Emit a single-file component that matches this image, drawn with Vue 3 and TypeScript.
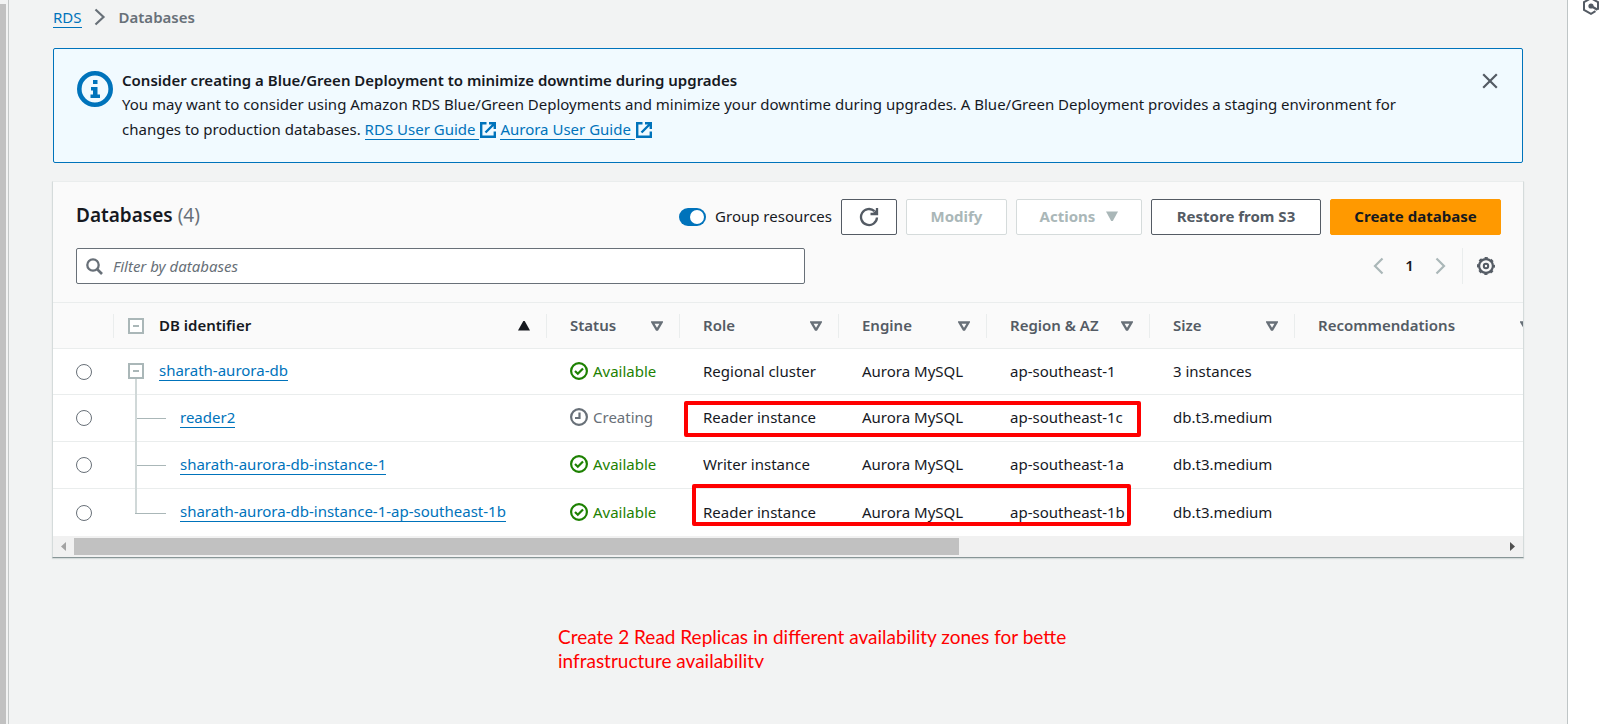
<script setup lang="ts">
import { ref } from 'vue'

interface Instance {
  id: string
  child: boolean
  status: 'Available' | 'Creating'
  role: string
  engine: string
  region: string
  size: string
}

const rows: Instance[] = [
  { id: 'sharath-aurora-db', child: false, status: 'Available', role: 'Regional cluster', engine: 'Aurora MySQL', region: 'ap-southeast-1', size: '3 instances' },
  { id: 'reader2', child: true, status: 'Creating', role: 'Reader instance', engine: 'Aurora MySQL', region: 'ap-southeast-1c', size: 'db.t3.medium' },
  { id: 'sharath-aurora-db-instance-1', child: true, status: 'Available', role: 'Writer instance', engine: 'Aurora MySQL', region: 'ap-southeast-1a', size: 'db.t3.medium' },
  { id: 'sharath-aurora-db-instance-1-ap-southeast-1b', child: true, status: 'Available', role: 'Reader instance', engine: 'Aurora MySQL', region: 'ap-southeast-1b', size: 'db.t3.medium' },
]

const columns = ['Status', 'Role', 'Engine', 'Region & AZ', 'Size', 'Recommendations']
const grouped = ref(true)
const filter = ref('')
const selected = ref('')
const bannerOpen = ref(true)
</script>

<template>
  <div class="shell">
    <div class="rail"><div class="rail-thumb"></div></div>
    <main class="main">
      <nav class="crumbs" aria-label="Breadcrumb">
        <a href="#" class="link">RDS</a>
        <svg class="crumb-sep" width="12" height="18" viewBox="0 0 12 18" aria-hidden="true">
          <path d="M1.5 1.5 9.5 9l-8 7.5" fill="none" stroke="#687078" stroke-width="2.2" />
        </svg>
        <span class="crumb-current">Databases</span>
      </nav>

      <section v-if="bannerOpen" class="banner">
        <svg class="info" width="36" height="36" viewBox="0 0 36 36" aria-hidden="true">
          <circle cx="18" cy="18" r="15.7" fill="none" stroke="#0073bb" stroke-width="4.6" />
          <path d="M16 9h4.5v4H16zM14 16h6.5v7.500H23V27h-9.500v-3.500H16V19.500h-2z" fill="#0073bb" />
        </svg>
        <div class="banner-text">
          <strong>Consider creating a Blue/Green Deployment to minimize downtime during upgrades</strong>
          <p>
            You may want to consider using Amazon RDS Blue/Green Deployments and minimize your downtime during upgrades. A Blue/Green Deployment provides a staging environment for changes to production databases.
            <template v-for="guide in ['RDS User Guide', 'Aurora User Guide']" :key="guide">
              <a href="#" class="link guide">{{ guide }}</a><svg class="external" width="16" height="16" viewBox="0 0 16 16" aria-hidden="true">
                <path d="M6.500 1.200H1.200v13.600h13.600V9.500M9 1.200h5.800V7M14.500 1.500 5.500 10.500" fill="none" stroke="#0073bb" stroke-width="2.400" />
              </svg>{{ ' ' }}
            </template>
          </p>
        </div>
        <button class="close" type="button" aria-label="Dismiss" @click="bannerOpen = false">
          <svg width="16" height="16" viewBox="0 0 16 16"><path d="m1.200 1.200 13.600 13.600m0-13.600L1.200 14.800" fill="none" stroke="#545b64" stroke-width="2.200" /></svg>
        </button>
      </section>

      <section class="panel">
        <header class="head">
          <div class="bar">
            <h1>Databases <span>(4)</span></h1>
            <label class="toggle"><input v-model="grouped" type="checkbox" role="switch" /><span>Group resources</span></label>
            <div class="actions">
              <button class="btn refresh" type="button" aria-label="Refresh">
                <svg width="20" height="20" viewBox="0 0 20 20">
                  <path d="M18 10.500a8 8 0 1 1-2.500-6.300M18 1v6h-6.500" fill="none" stroke="#545b64" stroke-width="2.300" />
                  <path d="m13 7 5-5v5z" fill="#545b64" />
                </svg>
              </button>
              <button class="btn modify" type="button" disabled>Modify</button>
              <button class="btn menu" type="button" disabled>
                Actions
                <svg width="12" height="10" viewBox="0 0 12 10"><path d="M0 .5h12L6.800 10H5.200z" fill="#aab7b8" /></svg>
              </button>
              <button class="btn restore" type="button">Restore from S3</button>
              <button class="btn primary" type="button">Create database</button>
            </div>
          </div>
          <div class="bar tools">
            <div class="search">
              <svg width="17" height="17" viewBox="0 0 17 17" aria-hidden="true">
                <circle cx="7" cy="7" r="5.700" fill="none" stroke="#687078" stroke-width="2.300" />
                <path d="m11 11 5 5" stroke="#687078" stroke-width="2.600" />
              </svg>
              <input v-model="filter" type="text" aria-label="Filter by databases" placeholder="Filter by databases" />
            </div>
            <div class="pager">
              <button type="button" aria-label="Previous page" disabled>
                <svg width="11" height="18" viewBox="0 0 11 18"><path d="M9.500 1.500 2 9l7.500 7.500" fill="none" stroke="#aab7b8" stroke-width="2.200" /></svg>
              </button>
              <button type="button" class="page">1</button>
              <button type="button" aria-label="Next page" disabled>
                <svg width="11" height="18" viewBox="0 0 11 18"><path d="M1.500 1.500 9 9l-7.500 7.500" fill="none" stroke="#aab7b8" stroke-width="2.200" /></svg>
              </button>
              <button type="button" class="gear" aria-label="Preferences">
                <svg width="18" height="18" viewBox="0 0 18 18" fill="none" stroke="#545b64">
                  <circle cx="9" cy="9" r="6.900" stroke-width="2.200" />
                  <circle cx="9" cy="9" r="8.100" stroke-width="1.800" stroke-dasharray="3.200 3.162" stroke-dashoffset="1.600" />
                  <circle cx="9" cy="9" r="2.200" stroke-width="2" />
                </svg>
              </button>
            </div>
          </div>
        </header>

        <div class="scroller">
          <table>
            <colgroup>
              <col class="c-pick" /><col class="c-id" /><col class="c-status" /><col class="c-role" />
              <col class="c-engine" /><col class="c-region" /><col class="c-size" /><col class="c-rec" />
            </colgroup>
            <thead>
              <tr>
                <th aria-label="Selection"></th>
                <th class="sorted">
                  <div class="th">
                    <button type="button" class="box" aria-label="Collapse all"></button>
                    <span class="grow">DB identifier</span>
                    <button type="button" class="sort" aria-label="Sorted ascending">
                      <svg width="12" height="10" viewBox="0 0 12 10"><path d="M5.300 0h1.400L12 9.500H0z" fill="#16191f" /></svg>
                    </button>
                  </div>
                </th>
                <th v-for="name in columns" :key="name">
                  <div class="th">
                    <span class="grow">{{ name }}</span>
                    <button type="button" class="sort" :aria-label="`Sort by ${name}`">
                      <svg width="12" height="10" viewBox="0 0 12 10"><path d="M1.500 1.500h9L6.300 8.500h-.6z" fill="none" stroke="#687078" stroke-width="2.400" /></svg>
                    </button>
                  </div>
                </th>
              </tr>
            </thead>
            <tbody>
              <tr v-for="row in rows" :key="row.id">
                <td class="pick"><input v-model="selected" type="radio" name="database" :value="row.id" :aria-label="`Select ${row.id}`" /></td>
                <td class="ident" :class="row.child ? 'child' : 'parent'">
                  <div class="id-cell">
                    <button v-if="!row.child" type="button" class="box" aria-label="Collapse cluster"></button>
                    <a href="#" class="link">{{ row.id }}</a>
                  </div>
                </td>
                <td>
                  <div class="status" :class="row.status.toLowerCase()">
                    <svg width="18" height="18" viewBox="0 0 18 18" fill="none" stroke="currentColor" stroke-width="2.200" aria-hidden="true">
                      <circle cx="9" cy="9" r="7.900" />
                      <path v-if="row.status === 'Available'" d="m5 9 2.800 2.700L13 6.500" />
                      <path v-else d="M9.500 4.500v5.500H5" />
                    </svg>
                    {{ row.status }}
                  </div>
                </td>
                <td>{{ row.role }}</td>
                <td>{{ row.engine }}</td>
                <td>{{ row.region }}</td>
                <td>{{ row.size }}</td>
                <td></td>
              </tr>
            </tbody>
          </table>
          <div class="mark mark-first"></div>
          <div class="mark mark-second"></div>
        </div>

        <div class="hbar" aria-hidden="true">
          <svg width="21" height="21" viewBox="0 0 21 21"><path d="M13 6v9l-5-4.500z" fill="#a3a3a3" /></svg>
          <div class="track"><div class="thumb"></div></div>
          <svg width="21" height="21" viewBox="0 0 21 21"><path d="M8 6v9l5-4.500z" fill="#505050" /></svg>
        </div>
      </section>

      <p class="note">Create 2 Read Replicas in different availability zones for bette<br />infrastructure availability</p>
    </main>
    <aside class="side">
      <button type="button" aria-label="Open panel">
        <svg width="18" height="18" viewBox="0 0 18 18" fill="none" stroke="#545b64" stroke-width="2">
          <path d="M16 12.800V5.200L9 1.200 2 5.200v7.600l7 4 4.500-2.600" />
          <circle cx="9" cy="9" r="2.600" fill="#545b64" stroke="none" />
          <path d="m9 9 6.500 3.800" stroke-width="2.400" />
        </svg>
      </button>
    </aside>
  </div>
</template>

<style>
body {
  background: #f2f3f3;
}
</style>

<style scoped>
.shell {
  display: flex;
  min-height: 100vh;
  background: #f2f3f3;
  color: #16191f;
  font-family: "Noto Sans", "Open Sans", sans-serif;
  font-size: 15px;
  line-height: 24px;
}
.shell * {
  box-sizing: border-box;
}
button {
  font: inherit;
  color: inherit;
  background: none;
  border: 0;
  padding: 0;
}
svg {
  display: block;
  flex: none;
}
.rail {
  display: flex;
  flex: none;
  width: 9px;
  padding-top: 4px;
  border-right: 1px solid #c4c8c8;
}
.rail-thumb {
  width: 6px;
  background: #c1c1c1;
}
.main {
  flex: 1;
  min-width: 0;
  padding: 5px 44px 0;
}
.side {
  flex: none;
  width: 44px;
  background: #fff;
  border-left: 1px solid #bfc5c6;
}
.side button {
  display: block;
  margin: -3px 0 0 14px;
}
.link {
  color: #0073bb;
  text-decoration: none;
  border-bottom: 1px solid #0073bb;
}
.crumbs {
  display: flex;
  align-items: center;
  height: 24px;
  margin-bottom: 19px;
}
.crumbs .link {
  line-height: 20px;
}
.crumb-sep {
  margin: 0 13px 0 12px;
}
.crumb-current {
  color: #687078;
  font-weight: 600;
}
.banner {
  display: flex;
  align-items: flex-start;
  padding: 19px 24px 20px 23px;
  background: #f1faff;
  border: 1px solid #0073bb;
  border-radius: 2px;
}
.info {
  margin: 3px 9px 0 0;
}
.banner-text {
  flex: 1;
  padding-right: 70px;
}
.banner strong {
  display: block;
  font-weight: 600;
}
.banner p {
  margin: 0;
  line-height: 25px;
}
.guide {
  padding-right: 4px;
}
.external {
  display: inline-block;
  vertical-align: -3px;
  margin-left: 1px;
}
.close {
  margin-top: 5px;
}
.panel {
  margin: 18px -1px 0;
  background: #fff;
  border: 1px solid #d5dbdb;
  border-top-color: #eaeded;
  border-bottom-color: #879596;
  box-shadow: 0 1px 1px #d5dbdb;
}
.head {
  padding: 17px 22px 18px 23px;
  background: #fafafa;
  border-bottom: 1px solid #eaeded;
}
.bar {
  display: flex;
  align-items: center;
  height: 36px;
}
.tools {
  justify-content: space-between;
  margin-top: 13px;
}
h1 {
  flex: 1;
  align-self: flex-start;
  margin: 0;
  font-size: 19px;
  line-height: 32px;
  font-weight: 600;
}
h1 span {
  color: #687078;
  font-weight: 400;
}
.toggle {
  display: flex;
  align-items: center;
  gap: 9px;
  margin-right: 9px;
}
.toggle span {
  padding-bottom: 2px;
}
.toggle input {
  appearance: none;
  display: flex;
  width: 27px;
  height: 18px;
  margin: 0;
  padding: 2px;
  border-radius: 9px;
  background: #879596;
}
.toggle input::before {
  content: "";
  width: 14px;
  height: 14px;
  border-radius: 50%;
  background: #fff;
}
.toggle input:checked {
  justify-content: flex-end;
  background: #0073bb;
}
.actions {
  display: flex;
  gap: 9px;
}
.btn {
  display: flex;
  align-items: center;
  justify-content: center;
  height: 36px;
  padding-bottom: 2px;
  background: #fff;
  border: 1px solid #545b64;
  border-radius: 2px;
  color: #545b64;
  font-weight: 700;
  white-space: nowrap;
}
.btn:disabled {
  color: #aab7b8;
  border-color: #d5dbdb;
}
.refresh {
  width: 56px;
  padding-bottom: 0;
}
.modify {
  width: 101px;
}
.menu {
  width: 126px;
  gap: 11px;
}
.restore {
  width: 170px;
}
.primary {
  width: 171px;
  color: #16191f;
  background: #f90;
  border-color: #f90;
}
.search {
  display: flex;
  align-items: center;
  gap: 10px;
  width: calc(50% + 16px);
  height: 36px;
  padding: 0 9px;
  background: #fff;
  border: 1px solid #687078;
  border-radius: 2px;
}
.search input {
  flex: 1;
  min-width: 0;
  padding: 0;
  border: 0;
  outline: 0;
  background: none;
  font: inherit;
  color: inherit;
}
.search input::placeholder {
  color: #687078;
  font-style: italic;
  opacity: 1;
}
.pager {
  display: flex;
  align-items: center;
  height: 36px;
  margin-right: 6px;
}
.page {
  width: 51px;
  padding-bottom: 2px;
  font-weight: 600;
}
.gear {
  display: flex;
  align-items: center;
  height: 36px;
  margin-left: 16px;
  padding-left: 14px;
  border-left: 1px solid #eaeded;
}
.scroller {
  position: relative;
  overflow: hidden;
}
table {
  table-layout: fixed;
  width: 100%;
  min-width: 1495px;
  border-collapse: separate;
  border-spacing: 0;
}
.c-pick { width: 60px; }
.c-id { width: 433px; }
.c-status { width: 133px; }
.c-role { width: 159px; }
.c-engine { width: 148px; }
.c-region { width: 163px; }
.c-size { width: 145px; }
.c-rec { width: 254px; }
th {
  height: 46px;
  padding: 0;
  background: #fafafa;
  border-bottom: 1px solid #eaeded;
  color: #545b64;
  font-weight: 600;
  text-align: left;
  white-space: nowrap;
}
.th {
  display: flex;
  align-items: center;
  height: 24px;
  padding: 0 16px 0 23px;
  border-left: 1px solid #eaeded;
}
th.sorted {
  color: #16191f;
}
th.sorted .th {
  padding-left: 14px;
}
.grow {
  flex: 1;
  padding-bottom: 2px;
}
.box {
  display: flex;
  align-items: center;
  justify-content: center;
  flex: none;
  width: 16px;
  height: 16px;
  margin-right: 15px;
  border: 2px solid #aab7b8;
  background: #fff;
}
.box::before {
  content: "";
  width: 6px;
  height: 2px;
  background: #aab7b8;
}
td {
  height: 47px;
  padding: 0 0 2px 24px;
  border-bottom: 1px solid #eaeded;
  white-space: nowrap;
}
tr:first-child td {
  height: 46px;
}
tr:last-child td {
  border-bottom: 0;
}
.pick {
  padding: 0 0 0 23px;
}
.pick input {
  appearance: none;
  display: block;
  width: 16px;
  height: 16px;
  margin: 0;
  border: 1px solid #687078;
  border-radius: 50%;
  background: #fff;
}
.pick input:checked {
  border: 5px solid #0073bb;
}
.ident {
  position: relative;
}
.id-cell {
  display: flex;
  align-items: center;
}
.id-cell .link {
  line-height: 20px;
}
.parent {
  padding-left: 15px;
}
.child {
  padding-left: 67px;
}
.parent::after,
.child::after {
  content: "";
  position: absolute;
  left: 22px;
  top: 0;
  bottom: -1px;
  width: 2px;
  background: #d0d8d8;
}
.parent::after {
  top: 30px;
}
tr:last-child .child::after {
  bottom: 50%;
}
.child::before {
  content: "";
  position: absolute;
  left: 22px;
  top: 50%;
  width: 31px;
  height: 1px;
  background: #aab7b8;
}
.status {
  display: flex;
  align-items: center;
  gap: 5px;
}
.available {
  color: #1d8102;
}
.creating {
  color: #687078;
}
.mark {
  position: absolute;
  border: 4px solid #f00;
  border-radius: 2px;
  pointer-events: none;
}
.mark-first {
  left: 631px;
  top: 98px;
  width: 457px;
  height: 36px;
}
.mark-second {
  left: 639px;
  top: 181px;
  width: 439px;
  height: 42px;
}
.hbar {
  display: flex;
  align-items: center;
  height: 21px;
  background: #f1f1f1;
}
.track {
  flex: 1;
  height: 17px;
}
.thumb {
  width: 62%;
  height: 100%;
  background: #c1c1c1;
}
.note {
  height: 43px;
  margin: 67px 0 0 505px;
  overflow: hidden;
  color: #f00;
  font-family: Lato, sans-serif;
  font-size: 19px;
  line-height: 24px;
}
</style>
